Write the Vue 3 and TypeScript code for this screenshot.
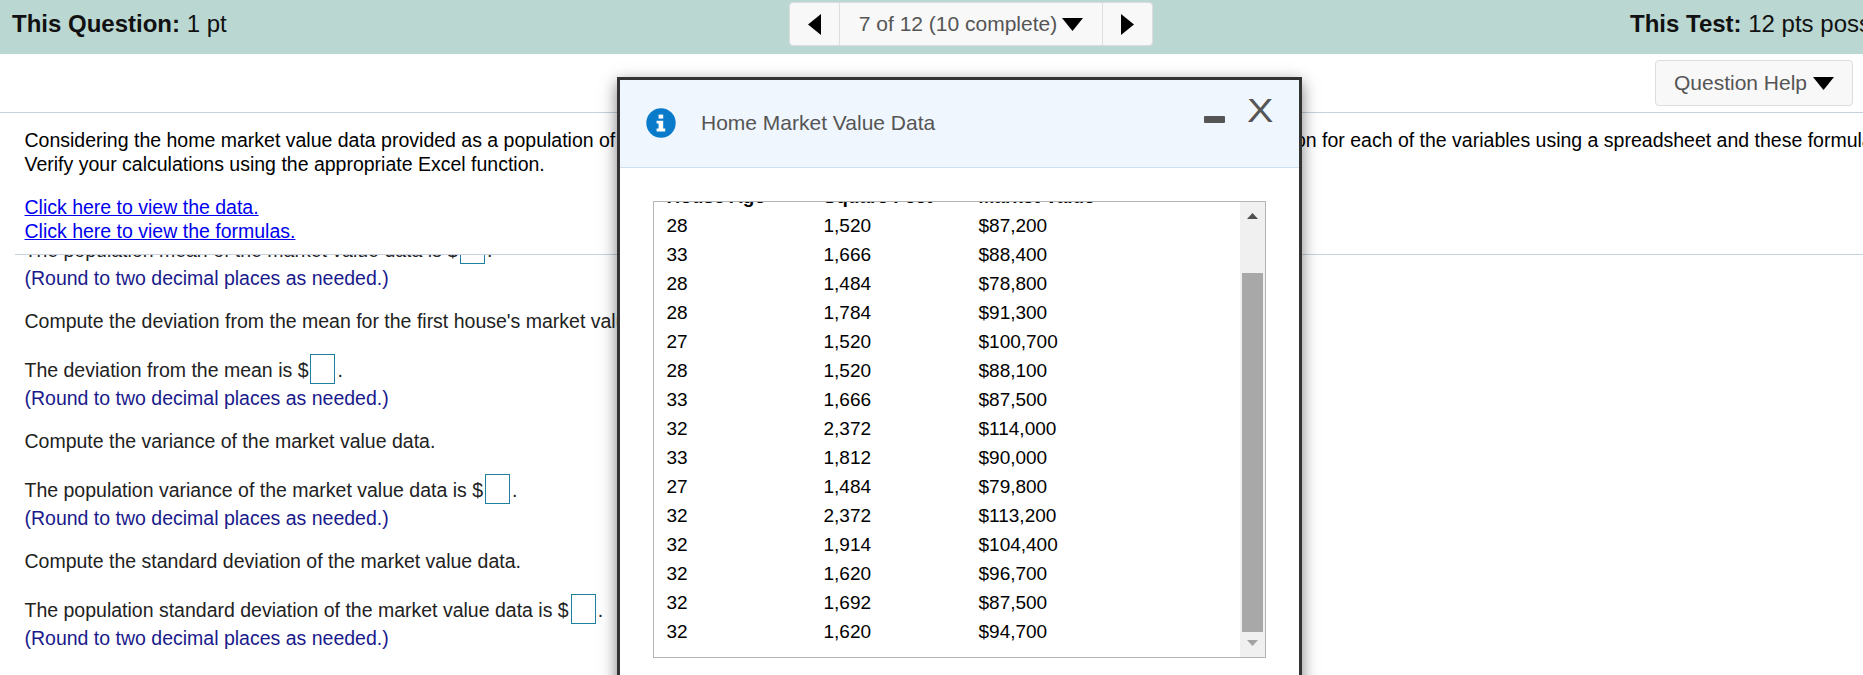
<script setup lang="ts">
const rows: [number, string, string][] = [
  [28, '1,520', '$87,200'],
  [33, '1,666', '$88,400'],
  [28, '1,484', '$78,800'],
  [28, '1,784', '$91,300'],
  [27, '1,520', '$100,700'],
  [28, '1,520', '$88,100'],
  [33, '1,666', '$87,500'],
  [32, '2,372', '$114,000'],
  [33, '1,812', '$90,000'],
  [27, '1,484', '$79,800'],
  [32, '2,372', '$113,200'],
  [32, '1,914', '$104,400'],
  [32, '1,620', '$96,700'],
  [32, '1,692', '$87,500'],
  [32, '1,620', '$94,700'],
]
const blocks = [
  { ask: '', stmt: 'The population mean of the market value data is $' },
  { ask: "Compute the deviation from the mean for the first house's market value.", stmt: 'The deviation from the mean is $' },
  { ask: 'Compute the variance of the market value data.', stmt: 'The population variance of the market value data is $' },
  { ask: 'Compute the standard deviation of the market value data.', stmt: 'The population standard deviation of the market value data is $' },
]
</script>

<template>
  <div class="page">
    <header class="topbar">
      <div class="score"><b>This Question:</b> 1 pt</div>
      <nav class="pager">
        <button class="pg-arrow"><svg width="13" height="21" viewBox="0 0 13 21"><path d="M13 0V21L0 10.5Z" /></svg></button>
        <button class="pg-mid">7 of 12 (10 complete)<svg class="caret" width="21" height="13" viewBox="0 0 21 13"><path d="M0 0H21L10.5 13Z" /></svg></button>
        <button class="pg-arrow"><svg width="13" height="21" viewBox="0 0 13 21"><path d="M0 0V21L13 10.5Z" /></svg></button>
      </nav>
      <div class="score test"><b>This Test:</b> 12 pts possible</div>
    </header>

    <div class="helprow">
      <button class="help">Question Help<svg class="caret" width="21" height="13" viewBox="0 0 21 13"><path d="M0 0H21L10.5 13Z" /></svg></button>
    </div>

    <section class="intro">
      <p>Considering the home market value data provided as a population of 120 homes in a small town, compute the mean, variance, and standard deviation for each of the variables using a spreadsheet and these formulas.</p>
      <p>Verify your calculations using the appropriate Excel function.</p>
      <p class="links"><a href="#">Click here to view the data.</a><br /><a href="#">Click here to view the formulas.</a></p>
    </section>

    <section class="answers">
      <div class="answers-inner">
        <div v-for="(b, i) in blocks" :key="i" class="block">
          <p v-if="b.ask" class="ask">{{ b.ask }}</p>
          <div class="stmt"><span>{{ b.stmt }}</span><input class="blank" type="text" /><span class="dot">.</span></div>
          <p class="note">(Round to two decimal places as needed.)</p>
        </div>
      </div>
    </section>

    <aside class="modal">
      <div class="modal-head">
        <svg class="info" width="30" height="30" viewBox="0 0 30 30">
          <circle cx="15" cy="15" r="14.7" fill="#0a7acb" />
          <rect x="12.6" y="6.6" width="4.6" height="4" fill="#fff" />
          <path d="M10.6 12.8H17.2V20.6H19.2V23.4H10.6V20.6H12.6V15.6H10.6Z" fill="#fff" />
        </svg>
        <span class="modal-title">Home Market Value Data</span>
        <span class="minus"></span>
        <span class="close">X</span>
      </div>
      <div class="modal-body">
        <div class="tbox">
          <div class="tscroll">
            <div class="trow thead"><span>House Age</span><span>Square Feet</span><span>Market Value</span></div>
            <div v-for="(r, i) in rows" :key="i" class="trow">
              <span>{{ r[0] }}</span><span>{{ r[1] }}</span><span>{{ r[2] }}</span>
            </div>
          </div>
          <div class="sbar">
            <svg class="sarrow" width="11" height="6" viewBox="0 0 11 6"><path d="M0 6H11L5.5 0Z" fill="#505050" /></svg>
            <div class="sthumb"></div>
            <svg class="sarrow down" width="11" height="6" viewBox="0 0 11 6"><path d="M0 0H11L5.5 6Z" fill="#a3a3a3" /></svg>
          </div>
        </div>
      </div>
    </aside>
  </div>
</template>

<style>
html, body { margin: 0; background: #fff; overflow: hidden; }
</style>

<style scoped>
.page {
  position: relative;
  width: 1863px;
  height: 675px;
  overflow: hidden;
  background: #fff;
  font-family: "Liberation Sans", Arial, sans-serif;
  font-size: 19.5px;
  line-height: 24px;
  color: #000;
}
p { margin: 0; }
.topbar {
  display: flex;
  height: 54px;
  background: #bad7d2;
  white-space: nowrap;
}
.score {
  flex: 0 0 777px;
  padding: 12px 0 0 12px;
  font-size: 24px;
  line-height: 24px;
  color: #111;
}
.test { flex: 0 0 auto; padding-left: 477px; }
.pager {
  flex: 0 0 auto;
  display: flex;
  width: 364px;
  height: 44px;
  margin-top: 2px;
  box-sizing: border-box;
  border: 1px solid #ddd;
  border-radius: 4px;
  background: #f8f8f8;
}
button {
  font: inherit;
  font-size: 21px;
  color: #555;
  background: #f8f8f8;
  border: 0;
  padding: 0;
  margin: 0;
}
.pg-arrow {
  flex: 0 0 49px;
  display: flex;
  align-items: center;
  justify-content: center;
  background: transparent;
}
.pg-mid {
  flex: 1;
  display: flex;
  align-items: center;
  justify-content: center;
  gap: 5px;
  background: transparent;
  border-left: 1px solid #ddd;
  border-right: 1px solid #ddd;
}
.helprow {
  display: flex;
  justify-content: flex-end;
  box-sizing: border-box;
  height: 59px;
  padding: 6px 10px 0 0;
  border-bottom: 1px solid #c9d1e0;
}
.help {
  display: flex;
  align-items: center;
  justify-content: center;
  gap: 6px;
  width: 198px;
  height: 46px;
  box-sizing: border-box;
  border: 1px solid #ddd;
  border-radius: 4px;
}
.intro {
  box-sizing: border-box;
  height: 142px;
  margin-left: 15px;
  padding: 15px 0 0 9.5px;
  border-bottom: 1px solid #c9d1e0;
  white-space: nowrap;
}
.links { margin-top: 19px; }
.links a { color: #0000ee; text-decoration: underline; }
.answers {
  height: 420px;
  overflow: hidden;
  padding-left: 24.5px;
  white-space: nowrap;
  color: #222;
}
.answers-inner { margin-top: -20px; }
.ask { margin-top: 19px; height: 24px; }
.stmt {
  display: flex;
  align-items: center;
  height: 30px;
  margin-top: 22px;
}
.block:first-child .stmt { margin-top: 0; }
.blank {
  box-sizing: border-box;
  width: 25px;
  height: 30px;
  margin: 0 0 2px 2px;
  padding: 0;
  border: 1px solid #1f7f9f;
  background: #fff;
  outline: 0;
}
.dot { margin-left: 2px; }
.note { margin-top: 1px; height: 24px; color: #1a1a8c; }

.modal {
  position: absolute;
  left: 617px;
  top: 77px;
  width: 685px;
  height: 640px;
  box-sizing: border-box;
  border: 3px solid #333;
  background: #fff;
  box-shadow: 0 5px 15px rgba(0, 0, 0, 0.5);
}
.modal-head {
  display: flex;
  align-items: center;
  box-sizing: border-box;
  height: 88px;
  padding: 0 0 2px 26px;
  background: #f0f6fe;
  border-bottom: 1px solid #cfe0ef;
  color: #555;
  position: relative;
}
.modal-title { margin-left: 25px; font-size: 21px; }
.minus {
  position: absolute;
  left: 584px;
  top: 36px;
  width: 21px;
  height: 7px;
  border-radius: 1px;
  background: #555;
}
.close {
  position: absolute;
  left: 627px;
  top: 11px;
  font-size: 33px;
  line-height: 40px;
  transform: scaleX(1.2);
  transform-origin: left center;
}
.modal-body { padding: 33px 33px 0 33px; }
.tbox {
  display: flex;
  justify-content: space-between;
  box-sizing: border-box;
  width: 613px;
  height: 457px;
  border: 1px solid #b5b5b5;
  overflow: hidden;
}
.tscroll { flex: 1; margin-top: -20px; padding-left: 12.5px; font-size: 19px; }
.trow {
  display: grid;
  grid-template-columns: 157px 155px 1fr;
  height: 29px;
  line-height: 29px;
  color: #000;
  white-space: nowrap;
}
.thead { font-weight: 700; }
.sbar {
  flex: 0 0 25px;
  display: flex;
  flex-direction: column;
  align-items: center;
  background: #f0f0f0;
}
.sarrow { margin-top: 11px; }
.sthumb {
  width: 21px;
  height: 359px;
  margin-top: 54px;
  background: #a8a8a8;
}
.sarrow.down { margin-top: 8px; }
</style>
